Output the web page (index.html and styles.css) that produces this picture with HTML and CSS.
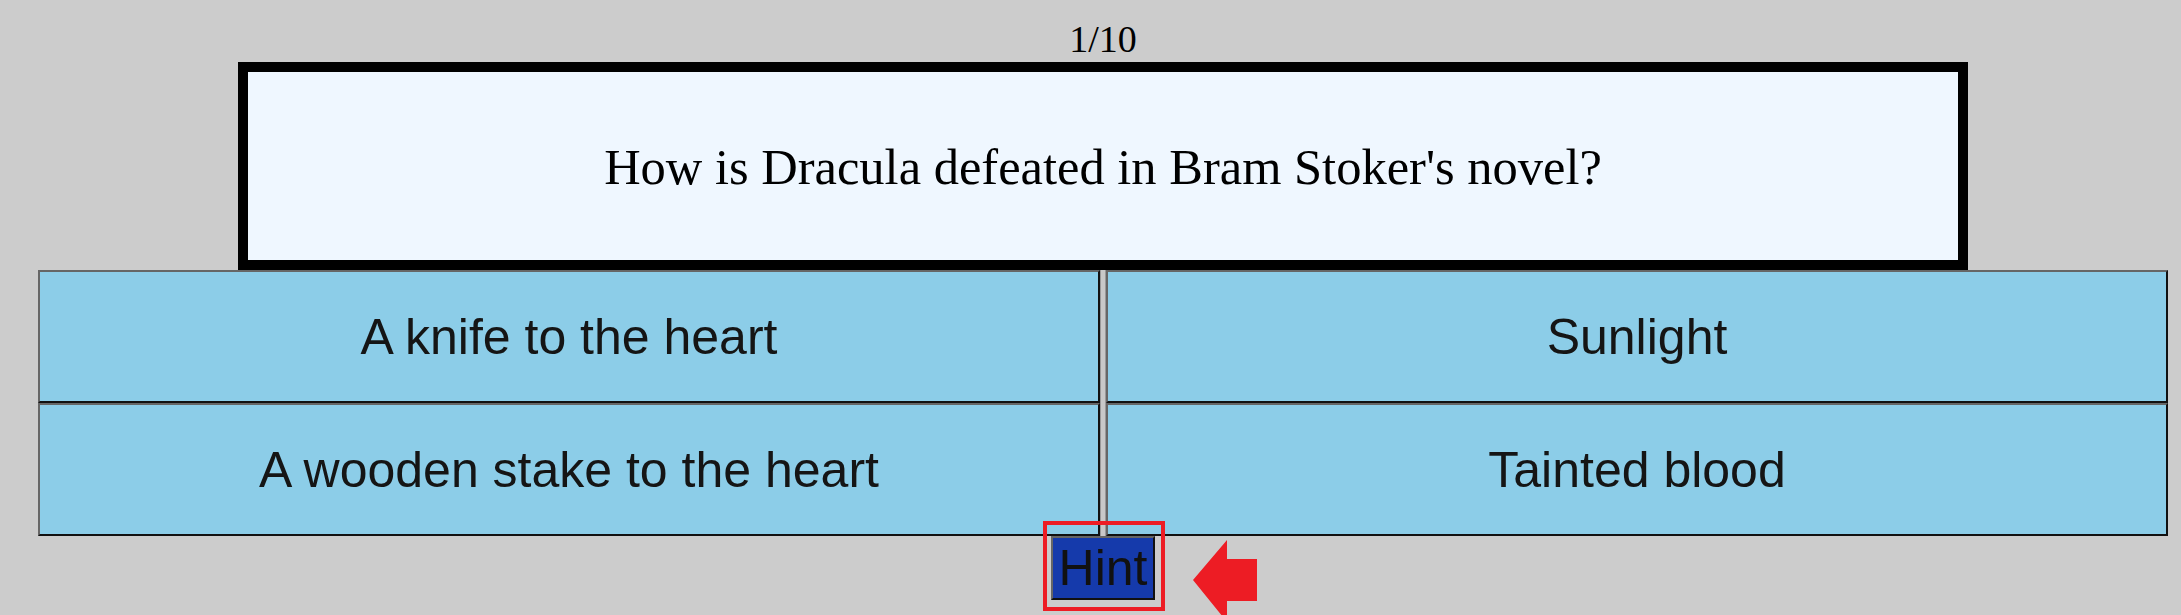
FILE: index.html
```html
<!DOCTYPE html>
<html>
<head>
<meta charset="utf-8">
<link rel="stylesheet" href="styles.css">
</head>
<body>
<div class="quiz">
  <div class="counter">1/10</div>
  <div class="question">How is Dracula defeated in Bram Stoker's novel?</div>
  <div class="answers">
    <button class="answer a1">A knife to the heart</button>
    <div class="divider"></div>
    <button class="answer a2">Sunlight</button>
    <button class="answer a3">A wooden stake to the heart</button>
    <button class="answer a4">Tainted blood</button>
  </div>
  <div class="hint-row">
    <div class="hint-wrap">
      <button class="hint">Hint</button>
      <div class="highlight"></div>
      <svg class="arrow" width="66" height="82" viewBox="0 0 66 82">
        <polygon points="0,40 34,0 34,19 64,19 64,61 34,61 34,82 0,40" fill="#ed1c24"/>
      </svg>
    </div>
  </div>
</div>
</body>
</html>
```

FILE: styles.css
```css
html, body {
  margin: 0;
  padding: 0;
  background: #cccccc;
  overflow: hidden;
}
body {
  width: 2181px;
  height: 615px;
}
.quiz {
  margin-left: 38px;
  width: 2130px;
  display: flex;
  flex-direction: column;
  align-items: center;
}
.counter {
  box-sizing: border-box;
  height: 62px;
  padding-top: 17px;
  line-height: 45px;
  font-family: "Liberation Serif", "Times New Roman", serif;
  font-size: 38px;
  color: #000;
  text-align: center;
}
.question {
  box-sizing: border-box;
  width: 1730px;
  height: 208px;
  border: 10px solid #000;
  background: #eff7ff;
  display: flex;
  align-items: center;
  justify-content: center;
  padding-top: 2px;
  font-family: "Liberation Serif", "Times New Roman", serif;
  font-size: 50.5px;
  color: #000;
}
.answers {
  display: grid;
  grid-template-columns: 1062px 6px 1062px;
  grid-template-rows: 133px 133px;
  width: 2130px;
}
.answer {
  box-sizing: border-box;
  margin: 0;
  padding: 0;
  background: #8ccde8;
  border-width: 2px;
  border-style: solid;
  border-color: #666666 #111111 #111111 #666666;
  font-family: "Liberation Sans", Arial, sans-serif;
  font-size: 50px;
  color: #151515;
}
.a1 { grid-column: 1; grid-row: 1; }
.a2 { grid-column: 3; grid-row: 1; }
.a3 { grid-column: 1; grid-row: 2; }
.a4 { grid-column: 3; grid-row: 2; }
.divider {
  grid-column: 2;
  grid-row: 1 / 3;
  box-sizing: border-box;
  background: #c8c8c8;
  border-left: 1px solid #999999;
  border-right: 1px solid #999999;
}
.hint-row {
  display: flex;
  justify-content: center;
  width: 2130px;
}
.hint-wrap {
  position: relative;
}
.hint {
  box-sizing: border-box;
  display: block;
  margin: 0;
  width: 104px;
  height: 64px;
  padding: 0;
  background: #153aab;
  border-width: 2px;
  border-style: solid;
  border-color: #666666 #111111 #111111 #666666;
  font-family: "Liberation Sans", Arial, sans-serif;
  font-size: 50px;
  line-height: 58px;
  color: #111111;
}
.highlight {
  position: absolute;
  left: -8px;
  top: -15px;
  width: 122px;
  height: 90px;
  box-sizing: border-box;
  border: 4px solid #ed1c24;
}
.arrow {
  position: absolute;
  left: 142px;
  top: 4px;
}
```
